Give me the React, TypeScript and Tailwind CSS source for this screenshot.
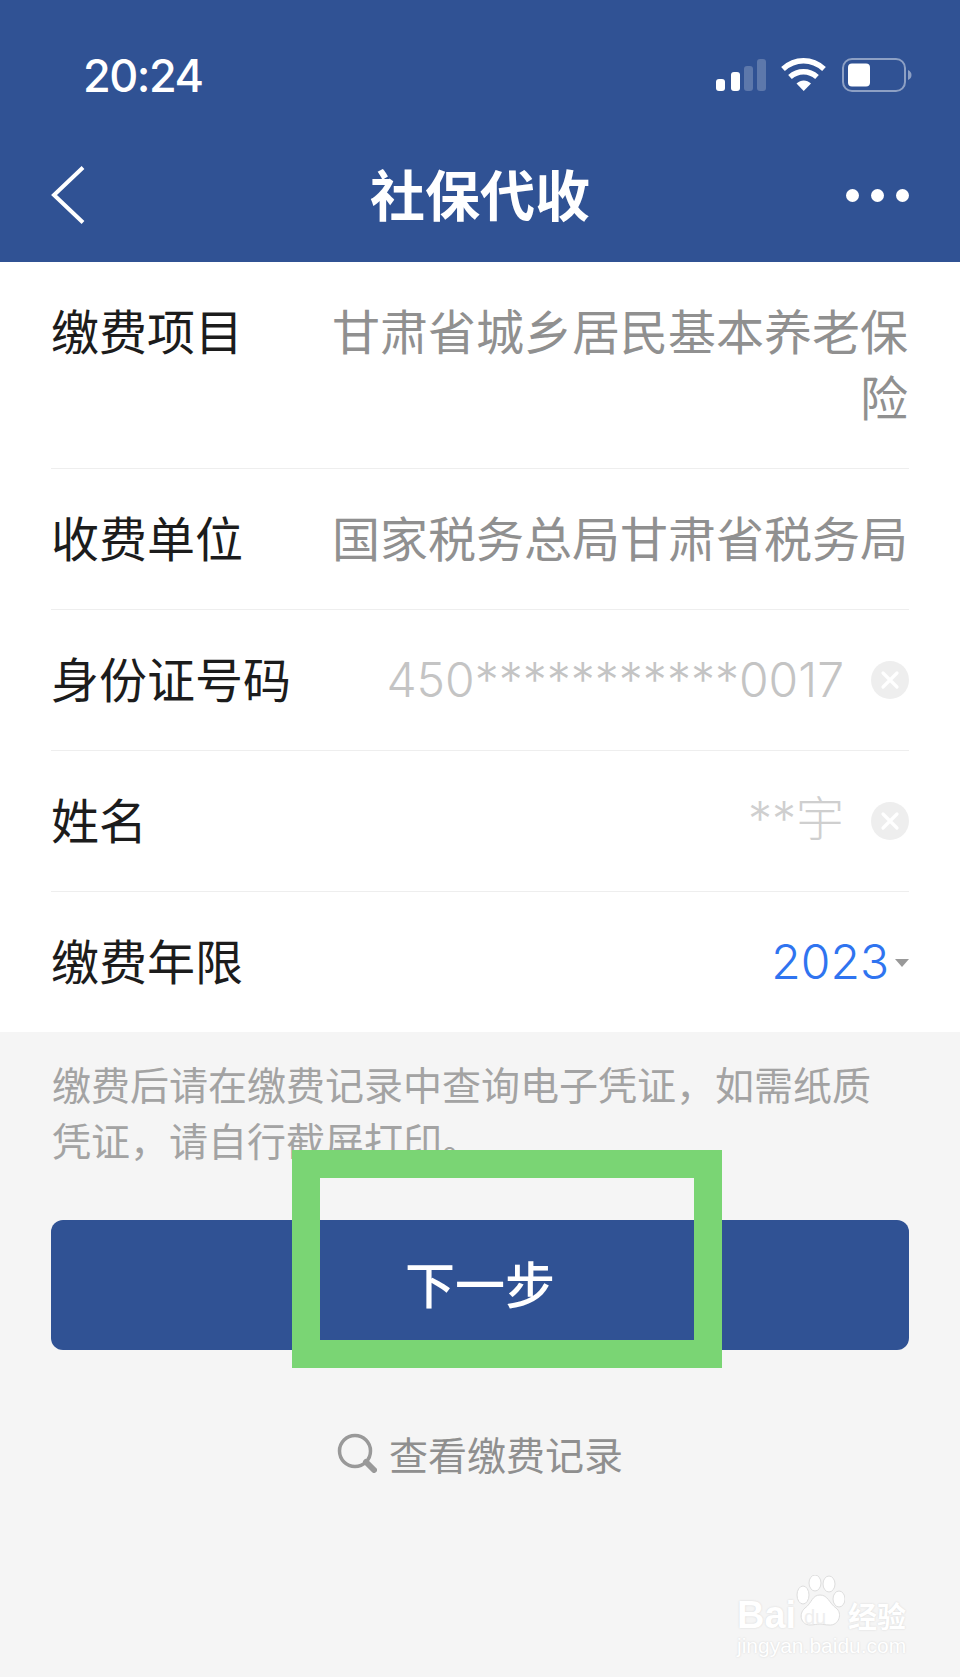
const cjk = "font-['Noto_Sans_CJK_SC','Liberation_Sans',sans-serif]";

function ClearIcon() {
  return (
    <svg className="w-[38px] h-[38px] flex-none" viewBox="0 0 38 38">
      <circle cx="19" cy="19" r="19" fill="#eeeeee" />
      <path d="M12 12l14 14M26 12L12 26" stroke="#ffffff" strokeWidth="3.2" strokeLinecap="round" />
    </svg>
  );
}

function StatusIcons() {
  return (
    <svg width="196" height="34" viewBox="0 0 196 34" fill="none">
      {/* signal */}
      <rect x="0" y="21" width="9" height="12" rx="3" fill="#fff" />
      <rect x="15" y="14" width="9" height="19" rx="3" fill="#fff" />
      <rect x="28" y="8" width="9" height="25" rx="3" fill="#fff" opacity="0.22" />
      <rect x="41" y="1" width="9" height="32" rx="3" fill="#fff" opacity="0.22" />
      {/* wifi */}
      <path d="M67 11C79 0 96 0 108 11" stroke="#fff" strokeWidth="5.5" />
      <path d="M74 19c8-7 19-7 27 0" stroke="#fff" strokeWidth="5.5" />
      <path d="M80.5 25.5c4.500-4 10-4 14.500 0L87.700 33z" fill="#fff" />
      {/* battery */}
      <rect x="127" y="1" width="62" height="32" rx="9" stroke="#fff" strokeOpacity="0.45" strokeWidth="2" />
      <rect x="132" y="5.500" width="22" height="23" rx="4" fill="#fff" />
      <path d="M192 12c2.500 1 3.500 3 3.500 5s-1 4-3.500 5z" fill="#fff" fillOpacity="0.45" />
    </svg>
  );
}

function Row({ label, children, last, nudge }: { label: string; children: React.ReactNode; last?: boolean; nudge?: boolean }) {
  return (
    <div className={`flex items-start pt-[34px] pb-[40px] ${last ? "" : "border-b border-[#eeeeee]"}`}>
      <div className="flex-none text-[48px] leading-[66px] text-[#1c1c1c]">{label}</div>
      <div className={`flex-1 min-w-0 flex justify-end items-center ${nudge ? "mt-[3px] -mb-[3px]" : ""}`}>{children}</div>
    </div>
  );
}

function Watermark() {
  return (
    <div className="absolute left-[737px] top-[1575px] w-[172px] h-[84px] text-white [text-shadow:0_0_2px_#d4d4d4] font-['Liberation_Sans',sans-serif]">
      <div className="absolute left-0 top-[18px] text-[38px] leading-[44px] font-bold">Bai</div>
      <svg className="absolute left-[58px] top-0" width="50" height="56" viewBox="0 0 50 56" fill="#fff" stroke="#dddddd" strokeWidth="1">
        <ellipse cx="8" cy="20" rx="6" ry="9" />
        <ellipse cx="20" cy="8" rx="6" ry="8" />
        <ellipse cx="34" cy="9" rx="6" ry="8" />
        <ellipse cx="44" cy="24" rx="6" ry="8" />
        <path d="M25 20c8 0 9 8 16 13 7 5 3 18-7 17-4 0-6-1-9-1s-6 1-10 1c-9 0-12-11-5-17 7-5 7-13 15-13z" />
      </svg>
      <div className="absolute left-[67px] top-[32px] text-[20px] leading-[20px] text-[#eeeeee] [text-shadow:none]">du</div>
      <div className={`absolute left-[111px] top-[23px] text-[29px] leading-[34px] font-bold whitespace-nowrap ${cjk}`}>经验</div>
      <div className="absolute left-0 top-[59px] text-[21px] leading-[24px] whitespace-nowrap">jingyan.baidu.com</div>
    </div>
  );
}

export default function App() {
  return (
    <div className={`relative w-[960px] h-[1677px] overflow-hidden bg-[#f5f5f5] ${cjk}`}>
      {/* Header */}
      <header className="h-[262px] bg-[#305294] text-white">
        <div className="h-[150px] pl-[83px] pr-[48px] flex items-center justify-between">
          <span className="font-['Inter',sans-serif] text-[45px] leading-none font-medium tracking-[-1.5px]">20:24</span>
          <StatusIcons />
        </div>
        <div className="h-[90px] px-[51px] grid grid-cols-[1fr_auto_1fr] items-center">
          <svg width="34" height="58" viewBox="0 0 34 58" fill="none">
            <path d="M32 1.500L3 29l29 27.500" stroke="#fff" strokeWidth="4" />
          </svg>
          <h1 className="text-[55px] leading-[84px] mb-[6px] font-bold">社保代收</h1>
          <div className="flex justify-end gap-[12px]">
            <span className="w-[13px] h-[13px] rounded-full bg-white" />
            <span className="w-[13px] h-[13px] rounded-full bg-white" />
            <span className="w-[13px] h-[13px] rounded-full bg-white" />
          </div>
        </div>
      </header>

      {/* Form */}
      <section className="bg-white px-[51px]">
        <Row label="缴费项目">
          <div className="w-[576px] mr-[1px] text-right text-[48px] leading-[66px] text-[#909090] break-all">
            甘肃省城乡居民基本养老保险
          </div>
        </Row>
        <Row label="收费单位">
          <div className="w-[576px] mr-[1px] text-right text-[48px] leading-[66px] text-[#909090]">
            国家税务总局甘肃省税务局
          </div>
        </Row>
        <Row label="身份证号码" nudge>
          <span className="font-['Inter',sans-serif] font-light text-[48px] leading-[66px] text-[#c4c4c4] mr-[27px]">
            450***********0017
          </span>
          <ClearIcon />
        </Row>
        <Row label="姓名" nudge>
          <span className="font-['Inter','Noto_Sans_CJK_SC',sans-serif] font-light text-[48px] leading-[62px] mb-[4px] text-[#cfcfcf] mr-[27px]">**宇</span>
          <ClearIcon />
        </Row>
        <Row label="缴费年限" last nudge>
          <span className="font-['Inter',sans-serif] font-light text-[48px] leading-[66px] text-[#2f74f0]">2023</span>
          <svg className="ml-[6px] mt-[2px]" width="14" height="8" viewBox="0 0 14 8">
            <path d="M0 0h14L7 8z" fill="#999999" />
          </svg>
        </Row>
      </section>

      {/* Note */}
      <p className="px-[52px] pt-[23px] text-[39px] leading-[56px] text-[#a3a3a3]">
        缴费后请在缴费记录中查询电子凭证，如需纸质凭证，请自行截屏打印。
      </p>

      {/* Next */}
      <div className="px-[51px] mt-[53px]">
        <button className="w-full h-[130px] rounded-[12px] bg-[#305294] text-white text-[50px] leading-[124px] pb-[6px] font-medium">下一步</button>
      </div>

      {/* Records */}
      <div className="mt-[79px] flex items-center justify-center gap-[12px] text-[39px] leading-[48px] text-[#8f8f8f]">
        <svg width="40" height="40" viewBox="0 0 40 40" fill="none">
          <circle cx="18" cy="18" r="15.500" stroke="#999999" strokeWidth="3.5" />
          <path d="M29 29l8 8" stroke="#999999" strokeWidth="6" strokeLinecap="round" />
        </svg>
        <span>查看缴费记录</span>
      </div>

      {/* Green annotation frame */}
      <div className="absolute left-[292px] top-[1150px] w-[430px] h-[218px] border-[#7ad574] border-[28px] pointer-events-none" />

      <Watermark />
    </div>
  );
}
